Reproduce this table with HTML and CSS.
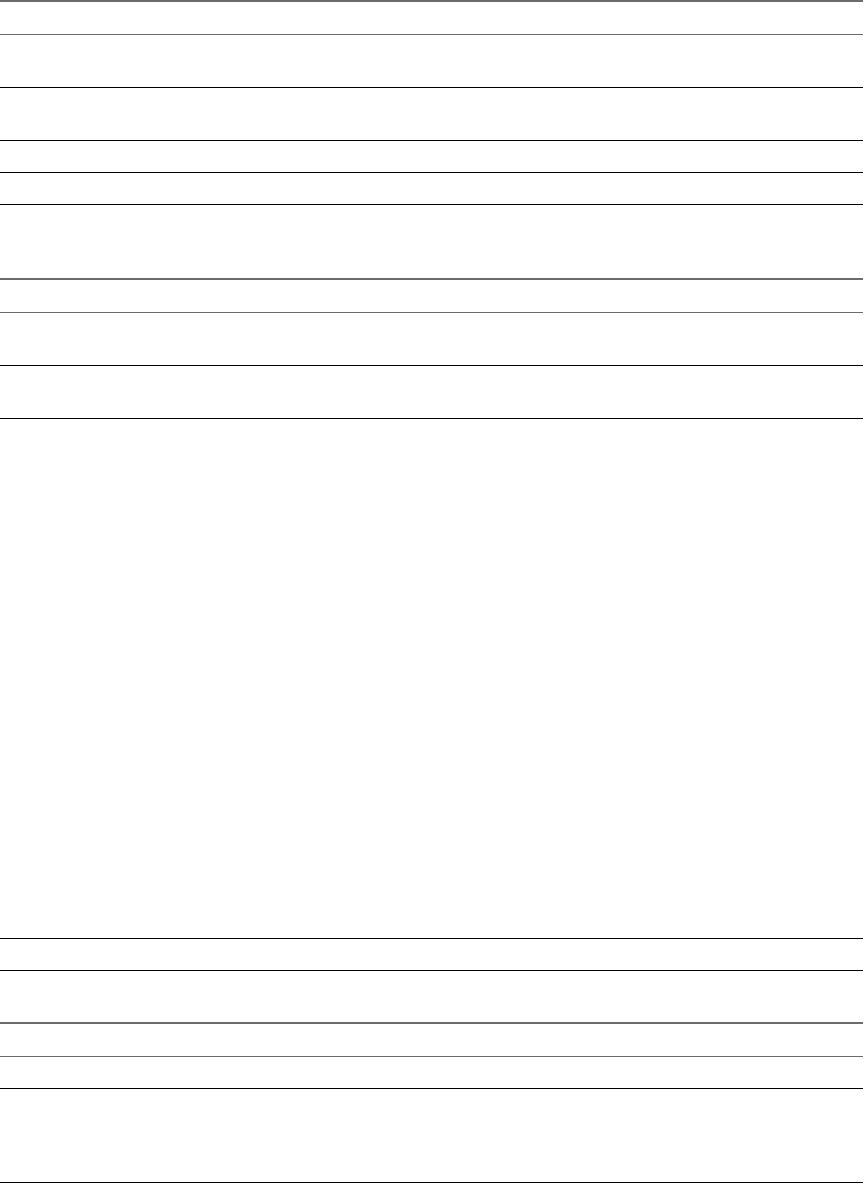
FILE: index.html
```html
<!DOCTYPE html>
<html lang="en">
<head>
  <meta charset="UTF-8">
  <meta name="viewport" content="width=device-width, initial-scale=1">
  <title>Sheet</title>
  <link rel="stylesheet" href="styles.css">
</head>
<body>

  <div class="sheet">
    <!-- Section 1 -->
    <div class="section">
      <div class="section-head"></div>
      <div class="row tall"></div>
      <div class="row tall"></div>
      <div class="row"></div>
      <div class="row"></div>
      <div class="row open" style="height: 73px"></div>
    </div>

    <!-- Section 2 -->
    <div class="section">
      <div class="section-head"></div>
      <div class="row tall"></div>
      <div class="row tall"></div>
      <div class="row" style="height: 519px"></div>
      <div class="row"></div>
      <div class="row open" style="height: 51px"></div>
    </div>

    <!-- Section 3 -->
    <div class="section">
      <div class="section-head"></div>
      <div class="row"></div>
      <div class="row" style="height: 93px"></div>
    </div>
  </div>

</body>
</html>
```

FILE: styles.css
```css
body {
  margin: 0;
  background: white;
  font-family: 'Liberation Sans', Arial, sans-serif;
}

.sheet {
  width: 863px;
  display: flex;
  flex-direction: column;
}

.section {
  display: flex;
  flex-direction: column;
}

.section-head {
  height: 32px;
  border-top: 2px solid #6b6b6b;
  border-bottom: 1px solid #6b6b6b;
}

.row {
  height: 31px;
  border-bottom: 1px solid #000;
}

.row.tall {
  height: 52px;
}

.row.open {
  border-bottom: none;
}
```
